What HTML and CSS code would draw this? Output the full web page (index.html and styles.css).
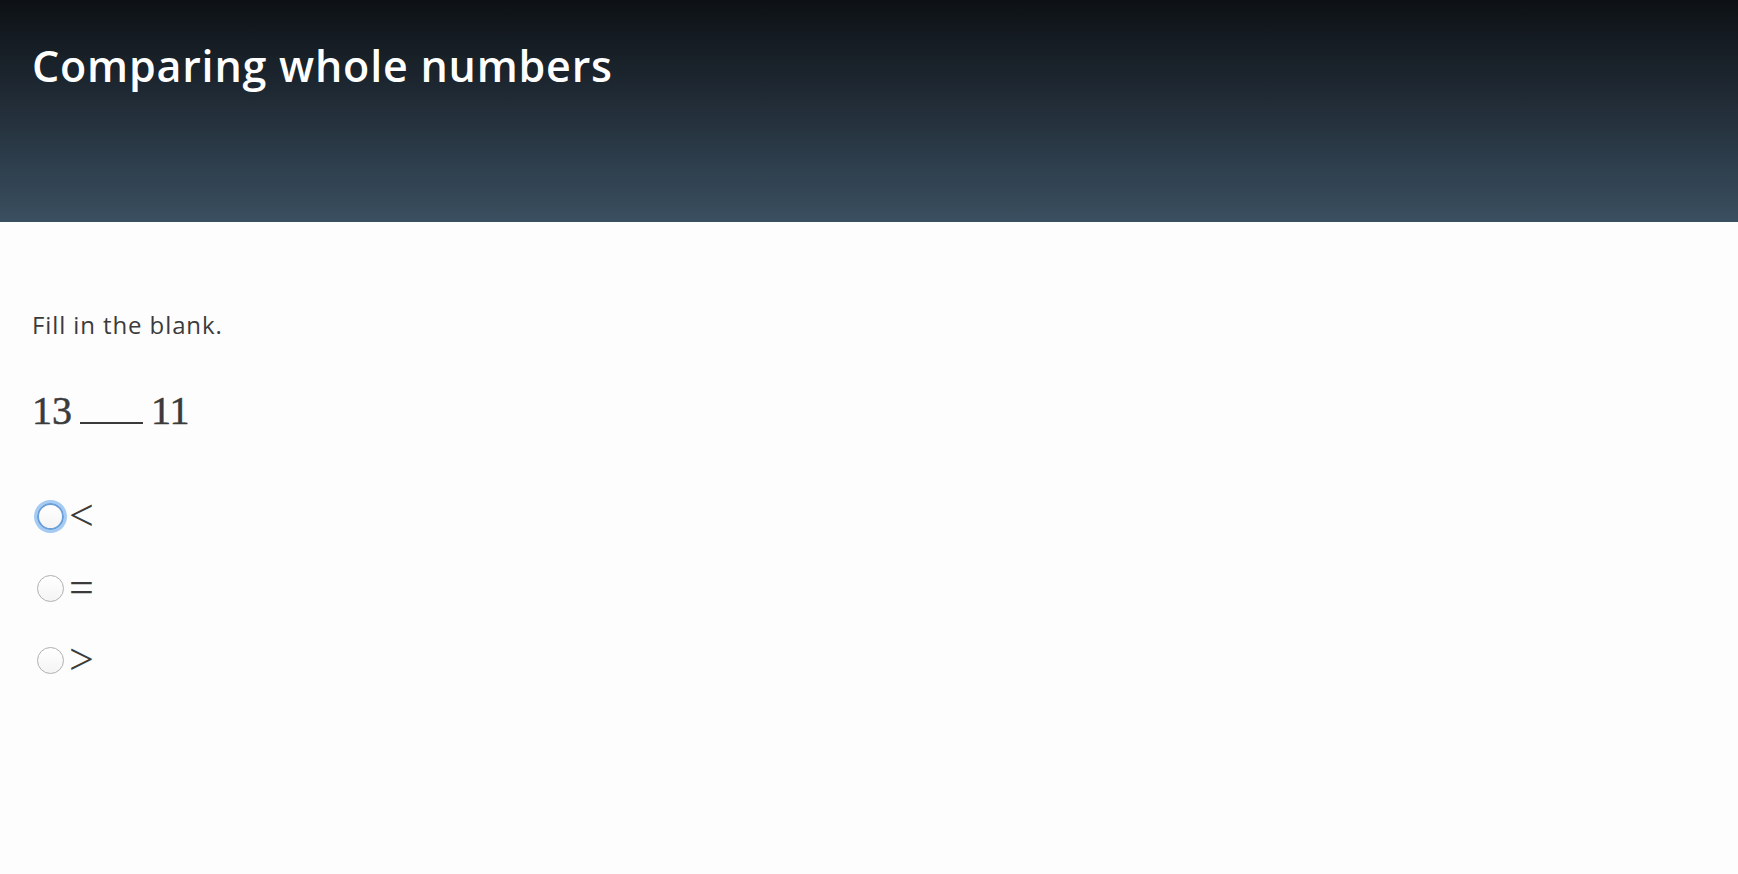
FILE: index.html
```html
<!DOCTYPE html>
<html>
<head>
<meta charset="utf-8">
<link rel="stylesheet" href="styles.css">
</head>
<body>
<header class="hero">
  <h1 class="title">Comparing whole numbers</h1>
</header>
<main class="content">
  <p class="prompt">Fill in the blank.</p>
  <div class="math"><span>13</span><span class="blank"></span><span>11</span></div>
  <ul class="choices">
    <li class="choice"><span class="radio focused"></span><span class="sym">&lt;</span></li>
    <li class="choice"><span class="radio"></span><span class="sym">=</span></li>
    <li class="choice"><span class="radio"></span><span class="sym">&gt;</span></li>
  </ul>
</main>
</body>
</html>
```
FILE: styles.css
```css
html, body {
  margin: 0;
  padding: 0;
  background: #fdfdfd;
  font-family: "Open Sans", Lato, sans-serif;
  color: #3b3b3b;
}
.hero {
  height: 222px;
  box-sizing: border-box;
  padding: 36px 32px 0;
  background: linear-gradient(to bottom, #0d1115 0%, #1e2832 40%, #3a4f60 100%);
}
.title {
  margin: 0;
  font-family: "Open Sans", sans-serif;
  font-weight: 600;
  font-size: 43px;
  line-height: 60px;
  letter-spacing: 0.8px;
  color: #ffffff;
}
.content {
  padding: 88px 32px 0;
}
.prompt {
  margin: 0;
  font-size: 24px;
  line-height: 30px;
  letter-spacing: 0.9px;
}
.math {
  margin-top: 47px;
  display: flex;
  align-items: baseline;
  font-family: "Liberation Serif", serif;
  font-size: 40px;
  color: #3b3b3b;
  -webkit-text-stroke: 0.5px #3b3b3b;
}
.blank {
  display: inline-block;
  width: 63px;
  margin: 0 8px;
  border-bottom: 2px solid #3b3b3b;
}
.choices {
  list-style: none;
  margin: 68px 0 0;
  padding: 0;
  display: flex;
  flex-direction: column;
  gap: 44px;
}
.choice {
  display: flex;
  align-items: center;
  height: 28px;
}
.radio {
  width: 27px;
  height: 27px;
  box-sizing: border-box;
  border-radius: 50%;
  border: 1px solid #b0b0b0;
  background: linear-gradient(#ffffff, #f4f4f4);
  margin-left: 5px;
}
.radio.focused {
  border: 2px solid #6a9fd8;
  box-shadow: 0 0 0 3px #a3cbf4;
}
.sym {
  margin-left: 5px;
  font-family: "Liberation Serif", serif;
  font-size: 44px;
  line-height: 28px;
  color: #3b3b3b;
}
```
